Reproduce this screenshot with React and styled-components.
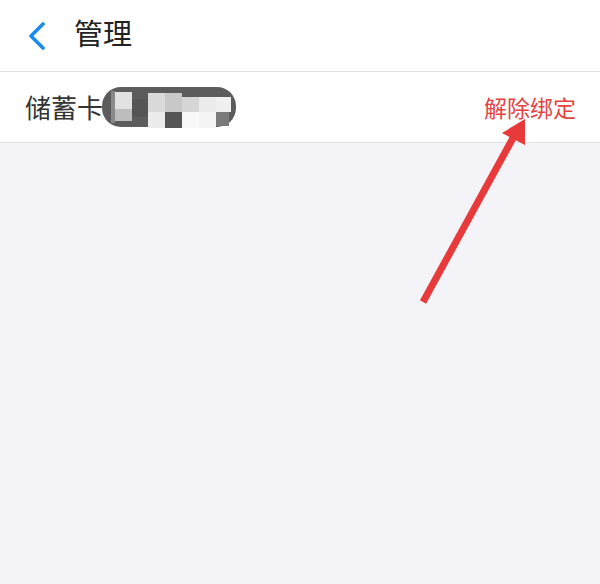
import styled, { createGlobalStyle } from 'styled-components';

const GlobalStyle = createGlobalStyle`
  html, body {
    margin: 0;
    padding: 0;
    background: #f4f3f8;
  }
  #root {
    min-height: 584px;
  }
`;

const Page = styled.div`
  position: relative;
  width: 600px;
  height: 584px;
  background: #f4f3f8;
  font-family: "Noto Sans CJK SC", "Noto Sans", sans-serif;
  overflow: hidden;
`;

const Header = styled.div`
  display: flex;
  align-items: center;
  height: 71px;
  padding-left: 24px;
  background: #fff;
  border-bottom: 1px solid #e3e3e6;
  box-sizing: content-box;
`;

const BackButton = styled.button`
  display: flex;
  align-items: center;
  justify-content: center;
  width: 26px;
  height: 30px;
  padding: 0;
  margin-right: 24px;
  border: 0;
  background: none;
`;

const Title = styled.h1`
  margin: 0 0 6px;
  font-size: 29px;
  font-weight: 400;
  color: #222;
  line-height: 1;
`;

const CardRow = styled.div`
  display: flex;
  align-items: center;
  justify-content: space-between;
  height: 70px;
  padding: 0 24px 0 25px;
  background: #fff;
  border-bottom: 1px solid #e3e3e6;
  box-sizing: content-box;
`;

const CardName = styled.div`
  display: flex;
  align-items: center;
  font-size: 26px;
  color: #333;
  line-height: 1;
`;

const Unbind = styled.span`
  font-size: 23px;
  color: #e5423f;
  line-height: 1;
`;

const Overlay = styled.svg`
  position: absolute;
  left: 0;
  top: 0;
  pointer-events: none;
`;

const Mosaic = () => (
  <svg width="138" height="48" viewBox="0 0 138 48" style={{ marginLeft: -2 }}>
    <rect x="1" y="4" width="134" height="40" rx="19" fill="#5c5c5c" />
    <rect x="10" y="8" width="4" height="32" fill="#8a8a8a" />
    <rect x="14" y="9" width="17" height="17" fill="#e2e2e2" />
    <rect x="14" y="26" width="17" height="12" fill="#bdbdbd" />
    <rect x="31" y="16" width="17" height="18" fill="#555" />
    <rect x="47" y="10" width="17" height="19" fill="#dadada" />
    <rect x="47" y="29" width="17" height="16" fill="#ececec" />
    <rect x="64" y="10" width="17" height="19" fill="#c8c8c8" />
    <rect x="64" y="29" width="17" height="16" fill="#555" />
    <rect x="81" y="14" width="17" height="15" fill="#d6d6d6" />
    <rect x="81" y="29" width="17" height="16" fill="#f8f8f8" />
    <rect x="98" y="14" width="17" height="15" fill="#ebebeb" />
    <rect x="98" y="29" width="17" height="16" fill="#f4f4f4" />
    <rect x="115" y="14" width="15" height="15" fill="#f0f0f0" />
    <rect x="115" y="29" width="13" height="14" fill="#7a7a7a" />
  </svg>
);

export default function App() {
  return (
    <Page>
      <GlobalStyle />
      <Header>
        <BackButton aria-label="返回">
          <svg width="20" height="28" viewBox="0 0 20 28">
            <path d="M16 2 L4 14 L16 26" fill="none" stroke="#1a8cec" strokeWidth="3.6" strokeLinecap="round" strokeLinejoin="round" />
          </svg>
        </BackButton>
        <Title>管理</Title>
      </Header>
      <CardRow>
        <CardName>
          储蓄卡
          <Mosaic />
        </CardName>
        <Unbind>解除绑定</Unbind>
      </CardRow>
      <Overlay width="600" height="584">
        <line x1="423" y1="302" x2="513" y2="138" stroke="#e83a3a" strokeWidth="7" />
        <polygon points="525,119 502,133 525,145" fill="#e83a3a" />
      </Overlay>
    </Page>
  );
}
